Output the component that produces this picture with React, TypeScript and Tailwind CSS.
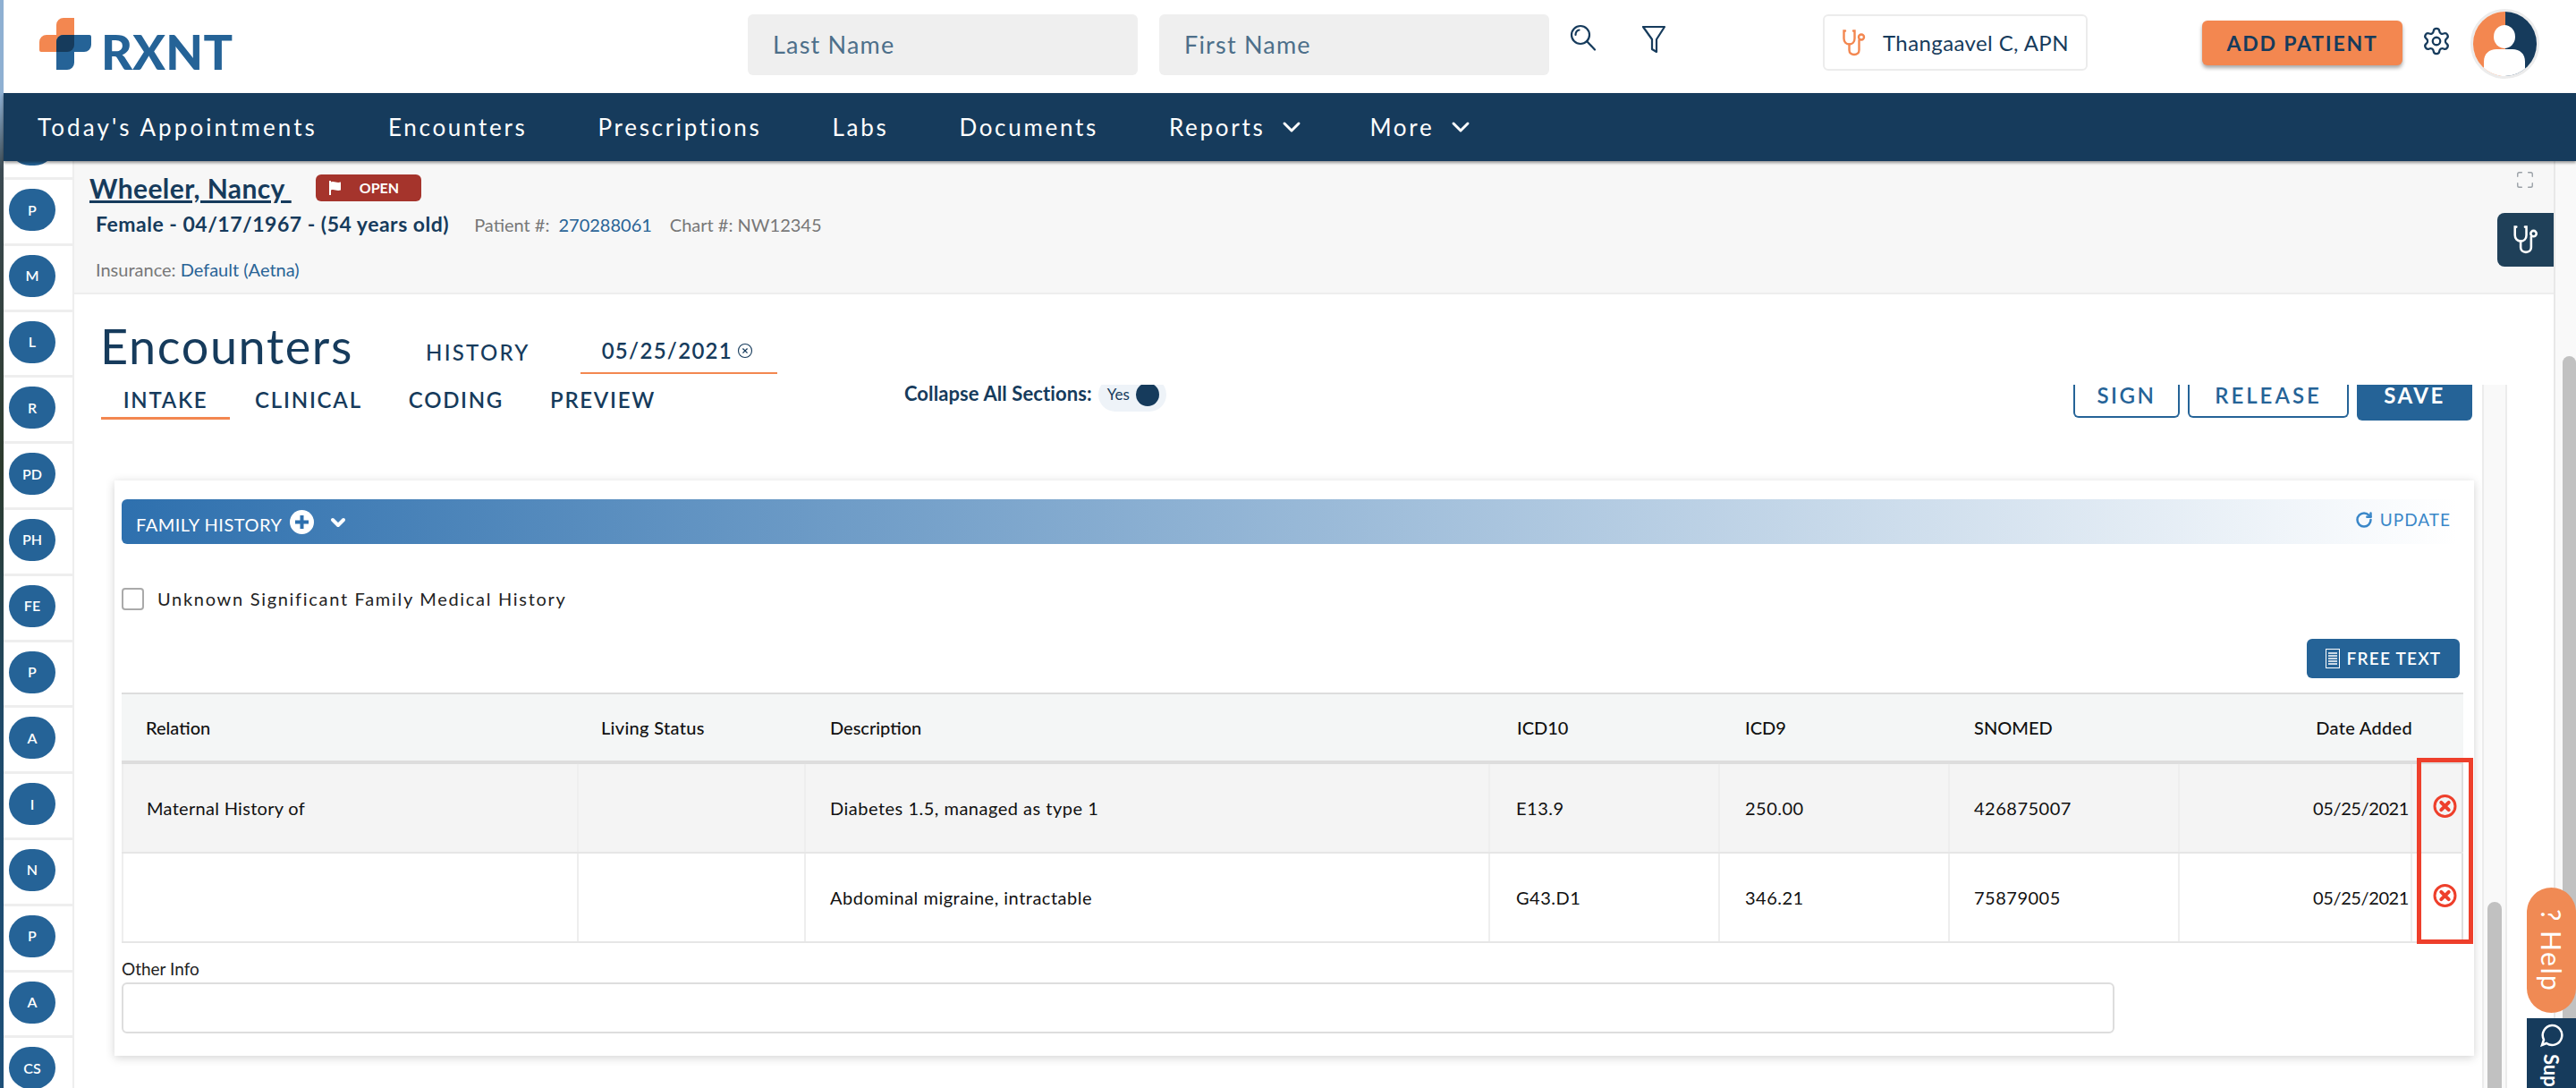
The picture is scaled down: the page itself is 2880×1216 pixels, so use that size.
import React from 'react'
import { ChevronDown, CircleX, Maximize, RotateCw, Settings } from 'lucide-react'

const sideItems = ['M', 'L', 'R', 'PD', 'PH', 'FE', 'P', 'A', 'I', 'N', 'P', 'A', 'CS']

const rows = [
  { relation: 'Maternal History of', desc: 'Diabetes 1.5, managed as type 1', icd10: 'E13.9', icd9: '250.00', snomed: '426875007', shade: true },
  { relation: '', desc: 'Abdominal migraine, intractable', icd10: 'G43.D1', icd9: '346.21', snomed: '75879005', shade: false },
]

const Logo = () => (
  <svg width="58" height="58" viewBox="0 0 58 58" className="shrink-0">
    <path d="M19 19V8a8 8 0 0 1 8-8H39V30a8 8 0 0 1-8 8H2a2 2 0 0 1-2-2V27a8 8 0 0 1 8-8Z" fill="#f38750" />
    <path d="M19 27a8 8 0 0 1 8-8H56a2 2 0 0 1 2 2V30a8 8 0 0 1-8 8H39V50a8 8 0 0 1-8 8H19Z" fill="#256397" />
    <path d="M19 27a8 8 0 0 1 8-8H39V30a8 8 0 0 1-8 8H19Z" fill="#163b5c" />
  </svg>
)

const Scope = ({ color, size }: { color: string; size: number }) => (
  <svg width={size} height={size} viewBox="0 0 30 30" fill="none" stroke={color} strokeWidth="2.4" strokeLinecap="round">
    <path d="M5 1.5H3.5V10c0 4 2.5 6.5 6 6.5s6-2.500 6-6.500V1.500H14" />
    <path d="M9.500 16.500V23c0 3 2.200 5 5.500 5s5.500-2 5.500-5V12" />
    <circle cx="23" cy="8.500" r="3" />
  </svg>
)

const Avatar = () => (
  <div className="w-[77px] h-[78px] rounded-full border-[3px] border-[#ececec] overflow-hidden shrink-0">
    <svg width="71" height="72" viewBox="0 0 71 72" className="block">
      <rect width="36" height="72" fill="#f38750" />
      <rect x="36" width="35" height="72" fill="#163b5c" />
      <ellipse cx="35" cy="28" rx="12" ry="13" fill="#fff" />
      <path d="M12 72V56c0-9 6-14 14-14h18c8 0 14 5 14 14v16Z" fill="#fff" />
    </svg>
  </div>
)

const RemoveIcon = () => (
  <svg width="27" height="26" viewBox="0 0 27 26" fill="none">
    <circle cx="13.500" cy="13" r="11.500" stroke="#ee3f2b" strokeWidth="3" />
    <path d="M9.300 8.800l8.400 8.400M17.700 8.800l-8.400 8.400" stroke="#ee3f2b" strokeWidth="4" strokeLinecap="round" />
  </svg>
)

const Circle = ({ label }: { label: string }) => (
  <div className="w-[52px] h-[47px] rounded-full bg-[#256397] text-white text-[16px] font-semibold flex items-center justify-center shrink-0">
    {label}
  </div>
)

const App = () => {
  return (
    <div className="relative w-[2880px] h-[1216px] overflow-hidden flex bg-white text-[#163b5c] [font-family:Lato,'Noto_Sans',sans-serif]">
      {/* bit of the desktop showing at the window edge */}
      <div className="w-[4px] h-full shrink-0 bg-[linear-gradient(180deg,#8fb0d2_0,#8fb0d2_104px,#3b4a52_190px,#2c3a2c_520px,#1f4a6a_820px,#1d4f78_100%)]" />

      <div className="flex-1 flex flex-col min-w-0">
        {/* top bar */}
        <header className="h-[104px] shrink-0 flex items-center bg-white">
          <div className="ml-[40px] w-[214px] flex items-start self-start pt-[20px]">
            <Logo />
            <span className="ml-[11px] mt-[12px] text-[54px] leading-[52px] font-black text-[#256397] tracking-[0.300px]">RXNT</span>
          </div>
          <div className="ml-[578px] -mt-[4px] flex items-center">
            <div className="w-[436px] h-[68px] rounded-[6px] bg-[#efefef] pl-[28px] flex items-center text-[27px] tracking-[1.200px] text-[#4d6f8a]">Last Name</div>
            <div className="ml-[24px] w-[436px] h-[68px] rounded-[6px] bg-[#efefef] pl-[28px] flex items-center text-[27px] tracking-[1.200px] text-[#4d6f8a]">First Name</div>
          </div>
          <svg width="30" height="30" viewBox="0 0 30 30" fill="none" stroke="#163b5c" strokeWidth="2.200" strokeLinecap="round" className="ml-[23px] -mt-[20px]">
            <circle cx="12" cy="12" r="10" />
            <path d="M19 19l9 9.500M6.500 12c0-3 2-5 4-5.500" />
          </svg>
          <svg width="28" height="32" viewBox="0 0 28 32" fill="none" stroke="#163b5c" strokeWidth="2.200" strokeLinejoin="round" className="ml-[50px] -mt-[16px]">
            <path d="M2 2h24L17 16v14l-5-3V16Z" />
          </svg>
          <div className="ml-[175px] w-[296px] h-[63px] -mt-[9px] rounded-[6px] border-2 border-[#ececec] flex items-center pl-[18px] gap-[17px]">
            <Scope color="#f38750" size={30} />
            <span className="text-[24px] tracking-[0.400px] text-[#163b5c]">Thangaavel C, APN</span>
          </div>
          <button className="ml-[128px] w-[224px] h-[50px] -mt-[8px] rounded-[6px] bg-[#f38750] shadow-[0_3px_4px_rgba(0,0,0,0.35)] text-[23px] font-bold tracking-[1.800px] text-[#163b5c]">
            ADD PATIENT
          </button>
          <Settings size={34} strokeWidth={1.600} color="#163b5c" className="ml-[21px] -mt-[12px]" />
          <div className="ml-[21px] -mt-[7px]">
            <Avatar />
          </div>
        </header>

        {/* nav */}
        <nav className="relative z-10 h-[76px] shrink-0 bg-[#163b5c] shadow-[0_2px_3px_rgba(0,0,0,0.4)] flex items-center pl-[38px] gap-[79px] text-[26px] tracking-[2.700px] text-white">
          <span className="tracking-[3.100px]">Today's Appointments</span>
          <span>Encounters</span>
          <span>Prescriptions</span>
          <span>Labs</span>
          <span>Documents</span>
          <span className="flex items-center gap-[14px] -mr-[8px]">Reports <ChevronDown size={32} strokeWidth={2.200} /></span>
          <span className="flex items-center gap-[14px]">More <ChevronDown size={32} strokeWidth={2.200} /></span>
        </nav>

        <div className="flex-1 flex min-h-0">
          {/* section shortcuts */}
          <aside className="w-[79px] shrink-0 flex flex-col overflow-hidden">
            <div className="h-[21px] shrink-0 overflow-hidden border-r-2 border-b-[3px] border-[#eeeeee] pl-[6px]">
              <div className="-mt-[42px]">
                <Circle label="" />
              </div>
            </div>
            <div className="h-[73.800px] shrink-0 border-r-2 border-b-[3px] border-[#eeeeee] pl-[6px] pt-[10px]">
              <Circle label="P" />
            </div>
            {sideItems.map((s, i) => (
              <div key={i} className="h-[73.800px] shrink-0 border-r-2 border-b-[3px] border-[#eeeeee] pl-[6px] pt-[10px]">
                <Circle label={s} />
              </div>
            ))}
          </aside>

          <div className="w-[2774px] shrink-0 flex flex-col border-r-2 border-[#e8e8e8]">
            {/* patient banner */}
            <section className="relative h-[149px] shrink-0 bg-[#f7f7f7] border-b-2 border-[#eeeeee] pl-[17px]">
              <div className="flex items-center pt-[13px]">
                <span className="text-[30px] leading-[34px] font-bold underline text-[#163b5c] tracking-[0.400px] whitespace-pre">Wheeler, Nancy </span>
                <span className="ml-[27px] w-[118px] h-[30px] rounded-[6px] bg-[#a5342c] text-white text-[16px] font-bold flex items-center pl-[14px] gap-[19px]">
                  <svg width="16" height="16" viewBox="0 0 16 16" fill="#fff"><path d="M1 0h2v16H1zM3 1.500c4-1.500 6 1.500 11 0v9c-5 1.500-7-1.500-11 0z" /></svg>
                  OPEN
                </span>
              </div>
              <div className="flex items-baseline pl-[7px] mt-[6px] whitespace-pre">
                <span className="text-[23px] font-bold tracking-[0.500px]">Female - 04/17/1967 - (54 years old)</span>
                <span className="ml-[28px] text-[20px] text-[#777777]">Patient #:</span>
                <span className="ml-[10px] text-[20px] text-[#2a6496]">270288061</span>
                <span className="ml-[20px] text-[20px] text-[#777777]">Chart #: NW12345</span>
              </div>
              <div className="pl-[7px] mt-[18px] text-[20px] whitespace-pre">
                <span className="text-[#777777]">Insurance: </span>
                <span className="text-[#2a6496]">Default (Aetna)</span>
              </div>
              <Maximize size={22} strokeWidth={1.500} color="#9aa0a6" className="absolute right-[21px] top-[10px]" />
              <div className="absolute right-0 top-[58px] w-[63px] h-[60px] rounded-l-[8px] bg-[#1f4059] flex items-center justify-center">
                <Scope color="#ffffff" size={32} />
              </div>
            </section>

            {/* page title */}
            <div className="h-[101px] shrink-0 flex pl-[29px] bg-white">
              <h1 className="text-[54px] leading-[66px] mt-[25px] tracking-[1.600px] text-[#163b5c]">Encounters</h1>
              <span className="ml-[81px] mt-[50px] text-[24px] leading-[30px] font-medium tracking-[2.300px]">HISTORY</span>
              <div className="ml-[56px] mt-[48px] w-[220px] h-[41px] border-b-2 border-[#f38750] flex items-start pl-[24px] gap-[5px]">
                <span className="text-[24px] leading-[30px] font-semibold tracking-[1.300px]">05/25/2021</span>
                <CircleX size={18} strokeWidth={1.500} className="mt-[6px]" />
              </div>
            </div>

            <div className="flex-1 flex min-h-0">
              <div className="w-[2692px] shrink-0 flex flex-col">
                {/* tabs + actions, buttons are cut flat by the scroller above */}
                <div className="h-[40px] shrink-0 flex pl-[30px]">
                  <div className="w-[144px] h-[39px] border-b-[3px] border-[#f38750] text-center text-[24px] leading-[34px] font-semibold tracking-[1.700px]">INTAKE</div>
                  <span className="ml-[28px] text-[24px] leading-[34px] font-semibold tracking-[1.800px]">CLINICAL</span>
                  <span className="ml-[52px] text-[24px] leading-[34px] font-semibold tracking-[1.700px]">CODING</span>
                  <span className="ml-[52px] text-[24px] leading-[34px] font-semibold tracking-[1.700px]">PREVIEW</span>
                  <span className="ml-[278px] text-[22px] leading-[20px] font-bold tracking-[0.100px]">Collapse All Sections:</span>
                  <div className="ml-[7px] w-[76px] h-[30px] shrink-0 overflow-hidden">
                    <div className="-mt-[8px] w-[76px] h-[38px] rounded-full bg-[#eef3f8] flex items-center pl-[10px] gap-[7px] text-[17px]">
                      Yes
                      <span className="w-[26px] h-[26px] rounded-full bg-[#163b5c]" />
                    </div>
                  </div>
                  <div className="ml-auto flex gap-[9px] items-start pr-[11px]">
                    <div className="w-[119px] h-[37px] border-2 border-t-0 border-[#256397] rounded-b-[6px] text-center text-[24px] leading-[24px] font-semibold tracking-[2.500px] text-[#256397]">SIGN</div>
                    <div className="w-[180px] h-[37px] border-2 border-t-0 border-[#256397] rounded-b-[6px] text-center text-[24px] leading-[24px] font-semibold tracking-[3px] text-[#256397]">RELEASE</div>
                    <div className="w-[129px] h-[40px] bg-[#256397] rounded-b-[6px] text-center text-[24px] leading-[24px] font-bold tracking-[2.500px] text-white">SAVE</div>
                  </div>
                </div>

                {/* family history card */}
                <div className="ml-[45px] mt-[67px] w-[2638px] h-[643px] shrink-0 bg-white shadow-[0_2px_10px_rgba(0,0,0,0.18)] pl-[8px] pt-[21px]">
                  <div className="w-[2612px] h-[50px] rounded-l-[6px] bg-[linear-gradient(90deg,#2e70ae,#f9fbfd_97%,#ffffff)] flex items-center pl-[16px]">
                    <span className="mt-[5px] text-[20px] text-white tracking-[0.500px]">FAMILY HISTORY</span>
                    <span className="ml-[9px] w-[27px] h-[27px] rounded-full bg-white flex items-center justify-center">
                      <svg width="15" height="15" viewBox="0 0 15 15" fill="#2e70ae"><path d="M5.500 0h4v5.500H15v4H9.500V15h-4V9.500H0v-4h5.500z" /></svg>
                    </span>
                    <ChevronDown size={24} strokeWidth={4} color="#fff" className="ml-[15px] mt-[2px]" />
                    <RotateCw size={20} strokeWidth={3} color="#3a87c8" className="ml-auto -mt-[4px]" />
                    <span className="ml-[8px] mr-[8px] -mt-[4px] text-[19px] tracking-[1px] text-[#3a87c8]">UPDATE</span>
                  </div>

                  <label className="mt-[46px] flex items-center">
                    <span className="w-[25px] h-[25px] rounded-[4px] border-2 border-[#aaaaaa] bg-white" />
                    <span className="ml-[15px] text-[20px] tracking-[1.700px] text-[#222222]">Unknown Significant Family Medical History</span>
                  </label>

                  <div className="mt-[30px] flex justify-end pr-[15px] w-[2629px]">
                    <button className="w-[171px] h-[44px] rounded-[6px] bg-[#256397] text-white text-[19px] font-semibold tracking-[1.200px] flex items-center justify-center gap-[8px]">
                      <svg width="16" height="22" viewBox="0 0 16 22" fill="none" stroke="#fff"><rect x="0.500" y="0.500" width="15" height="21" /><path d="M3 5h10M3 8h10M3 11h10M3 14h10M3 17h10" strokeWidth="1.500" /></svg>
                      FREE TEXT
                    </button>
                  </div>

                  <div className="relative mt-[16px] w-[2618px]">
                    <div className="grid grid-cols-[511px_254px_765px_257px_257px_257px_260px_57px] h-[80px] bg-[#f4f6f6] border-t-2 border-b-4 border-[#dddddd] text-[20px] font-medium text-[#111111] items-center">
                      <span className="pl-[27px]">Relation</span>
                      <span className="pl-[25px] tracking-[0.300px]">Living Status</span>
                      <span className="pl-[27px]">Description</span>
                      <span className="pl-[30px]">ICD10</span>
                      <span className="pl-[28px]">ICD9</span>
                      <span className="pl-[27px]">SNOMED</span>
                      <span className="text-right tracking-[0.300px]">Date Added</span>
                      <span />
                    </div>
                    {rows.map((r) => (
                      <div key={r.desc} className={`grid grid-cols-[511px_254px_765px_257px_257px_257px_260px_57px] h-[100px] items-stretch text-[20px] text-[#111111] border-b-2 border-[#e6e6e6] ${r.shade ? 'bg-[#f4f4f4]' : 'bg-white'}`}>
                        <div className="pl-[26px] flex items-center border-l-2 border-r-2 border-[#eeeeee] tracking-[0.300px]">{r.relation}</div>
                        <div className="flex items-center border-r-2 border-[#eeeeee]" />
                        <div className="pl-[27px] flex items-center border-r-2 border-[#eeeeee] tracking-[0.500px]">{r.desc}</div>
                        <div className="pl-[29px] flex items-center border-r-2 border-[#eeeeee] tracking-[0.500px]">{r.icd10}</div>
                        <div className="pl-[28px] flex items-center border-r-2 border-[#eeeeee] tracking-[0.500px]">{r.icd9}</div>
                        <div className="pl-[27px] flex items-center border-r-2 border-[#eeeeee] tracking-[0.500px]">{r.snomed}</div>
                        <div className="flex items-center justify-end pr-[2px] border-r-2 border-[#eeeeee] tracking-[-0.400px]">05/25/2021</div>
                        <div className="flex items-center pl-[23px] pb-[4px] border-r-2 border-[#dddddd]">
                          <RemoveIcon />
                        </div>
                      </div>
                    ))}
                    {/* annotation drawn over the table */}
                    <div className="absolute left-[2566px] top-[73px] w-[63px] h-[208px] border-[5px] border-[#ee3f2b]" />
                  </div>

                  <div className="mt-[18px] text-[19px] leading-[22px] text-[#222222]">Other Info</div>
                  <div className="mt-[4px] w-[2228px] h-[57px] rounded-[6px] border-2 border-[#dddddd]" />
                </div>
              </div>

              {/* inner scrollbar */}
              <div className="w-[28px] shrink-0 bg-[#f9f9f9] border-x-2 border-[#ececec] flex justify-center items-end">
                <div className="w-[16px] h-[208px] rounded-t-full bg-[#c1c1c1]" />
              </div>
              <div className="flex-1 bg-white" />
            </div>
          </div>

          {/* outer scrollbar */}
          <div className="flex-1 bg-[#f9f9f9] flex justify-end items-end">
            <div className="w-[15px] h-[818px] rounded-t-full bg-[#c1c1c1]" />
          </div>
        </div>
      </div>

      {/* floating widgets */}
      <div className="absolute right-0 top-[992px] w-[55px] h-[140px] rounded-[28px] bg-[#f08a54] text-white text-[30px] tracking-[1.500px] flex items-center justify-center [writing-mode:vertical-rl]">
        ? Help
      </div>
      <div className="absolute right-0 top-[1138px] w-[55px] h-[78px] overflow-hidden bg-[#163b5c] text-white text-[22px] font-bold flex items-center pt-[6px] gap-[8px] [writing-mode:vertical-rl] whitespace-nowrap">
        <svg width="26" height="26" viewBox="0 0 26 26" fill="none" stroke="#fff" strokeWidth="2.500" className="shrink-0">
          <path d="M13 2a11 11 0 1 1-6 20L2 24l2-6A11 11 0 0 1 13 2Z" />
        </svg>
        Support
      </div>
    </div>
  )
}

export default App
